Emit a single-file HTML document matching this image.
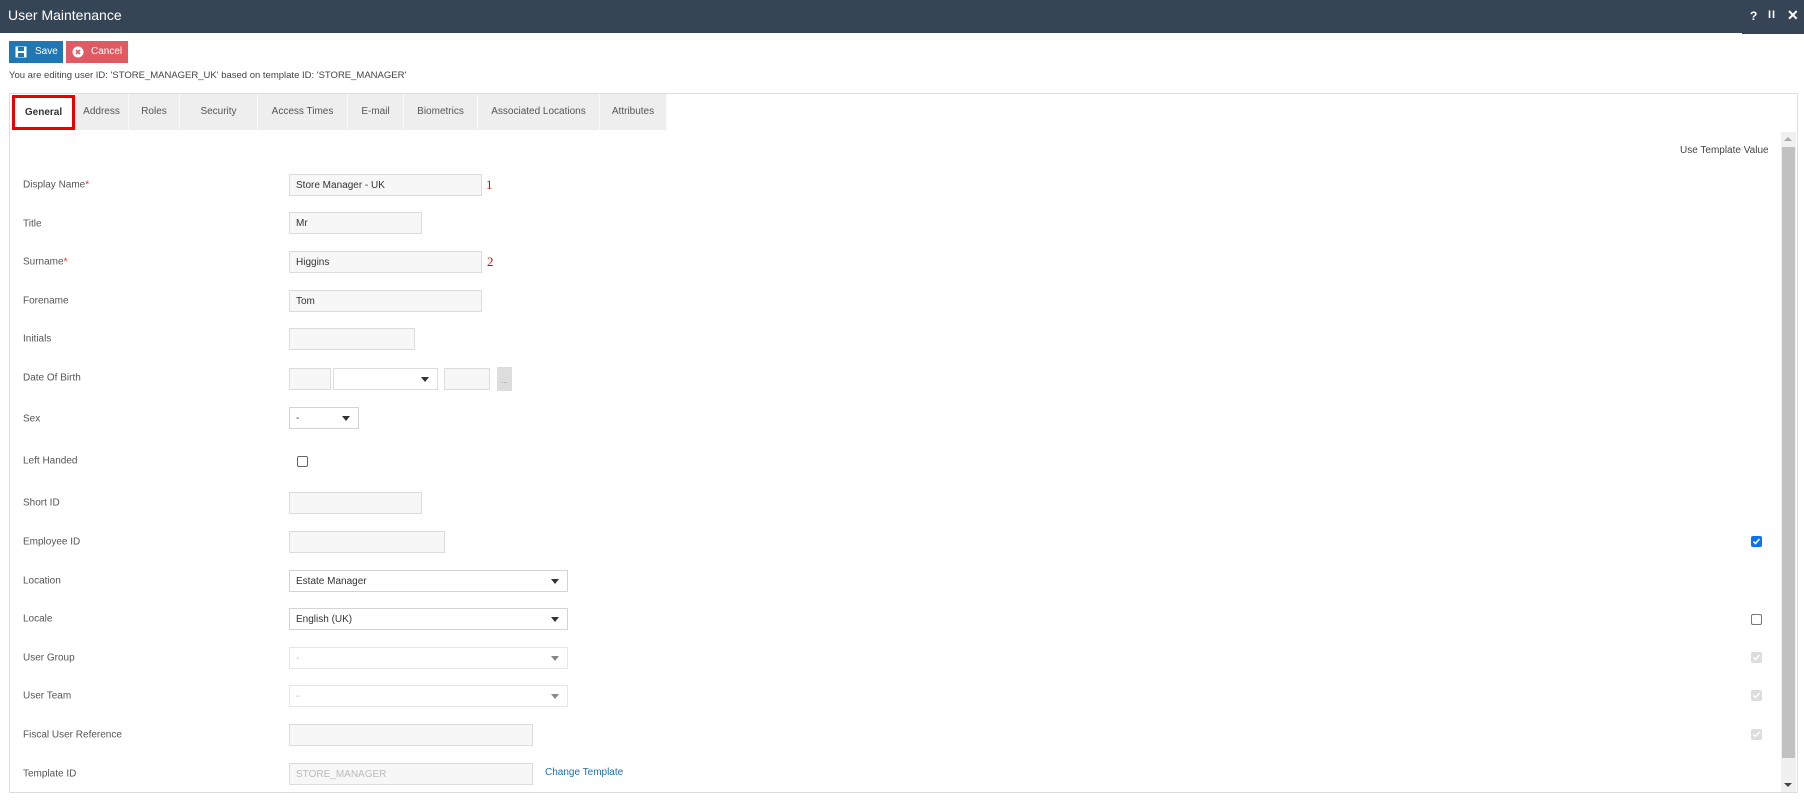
<!DOCTYPE html>
<html><head><meta charset="utf-8"><style>
*{box-sizing:border-box;margin:0;padding:0}
body{width:1804px;height:801px;background:#fff;font-family:"Liberation Sans",Arial,sans-serif;position:relative;overflow:hidden;color:#333}
.a{position:absolute}
.hdr{left:0;top:0;width:1804px;height:33px;background:#364556}
.lbl{position:absolute;left:23px;font-size:10px;color:#555;transform:translateY(-50%)}
.req{color:#d33}
.in{position:absolute;left:289px;height:22px;background:#f7f7f7;border:1px solid #dcdcdc;font-size:10px;padding-left:6px;line-height:21px;color:#333}
.sel{position:absolute;left:289px;height:22px;background:#fff;border:1px solid #d4d4d4;font-size:10px;padding-left:6px;line-height:21px;color:#333}
.sel:after{content:"";position:absolute;right:8px;top:8px;border-left:4px solid transparent;border-right:4px solid transparent;border-top:5px solid #333}
.sel.dis{border-color:#e6e6e6;color:#bbb}
.sel.dis:after{border-top-color:#888}
.tab{position:absolute;top:94px;height:36px;background:#eee;font-size:10px;color:#555;text-align:center;line-height:36px;border-right:1px solid #fafafa}
.cb{position:absolute;width:11px;height:11px;border-radius:2px}
</style></head><body>
<div class="a hdr"></div>
<div class="a" style="left:1742px;top:32px;width:62px;height:2px;background:#364556"></div>
<div class="a" style="left:8px;top:7px;font-size:14px;color:#fff">User Maintenance</div>
<div class="a" style="left:1750px;top:9px;font-size:12px;color:#fff;font-weight:bold">?</div>
<div class="a" style="left:1768px;top:9px;font-size:11px;color:#fff;font-weight:bold;letter-spacing:1px">II</div>
<div class="a" style="left:1787px;top:7px;font-size:14px;color:#fff;font-weight:bold">✕</div>

<div class="a" style="left:9px;top:41px;width:54px;height:22px;background:#1f78b4;color:#fff;font-size:10px;line-height:22px;padding-left:26px">Save</div>
<svg class="a" style="left:15px;top:46px" width="12" height="12" viewBox="0 0 12 12"><rect x="0.5" y="0.5" width="11" height="11" fill="#fff"/><rect x="3" y="1" width="6" height="4" fill="#1f78b4"/><rect x="3" y="7" width="6" height="4" fill="#1f78b4"/></svg>
<div class="a" style="left:66px;top:41px;width:62px;height:22px;background:#e05a63;color:#fff;font-size:10px;line-height:22px;padding-left:25px">Cancel</div>
<svg class="a" style="left:72px;top:46px" width="12" height="12" viewBox="0 0 12 12"><circle cx="6" cy="6" r="5.5" fill="#fff"/><path d="M4 4L8 8M8 4L4 8" stroke="#e05a63" stroke-width="1.6"/></svg>
<div class="a" style="left:9px;top:70px;font-size:9.5px;color:#444">You are editing user ID: 'STORE_MANAGER_UK' based on template ID: 'STORE_MANAGER'</div>

<div class="a" style="left:9px;top:93px;width:1789px;height:700px;border:1px solid #ddd"></div>
<div class="tab" style="left:75px;width:54px">Address</div>
<div class="tab" style="left:129px;width:51px">Roles</div>
<div class="tab" style="left:180px;width:78px">Security</div>
<div class="tab" style="left:258px;width:90px">Access Times</div>
<div class="tab" style="left:348px;width:56px">E-mail</div>
<div class="tab" style="left:404px;width:74px">Biometrics</div>
<div class="tab" style="left:478px;width:122px">Associated Locations</div>
<div class="tab" style="left:600px;width:67px">Attributes</div>
<div class="a" style="left:12px;top:95px;width:63px;height:35px;border:3px solid #e00;background:#fff;font-size:10px;line-height:29px;text-align:center;color:#333;font-weight:bold">General</div>

<div class="a" style="left:1680px;top:145px;font-size:10px;color:#444">Use Template Value</div>
<div class="a" style="left:1781px;top:132px;width:15px;height:660px;background:#f0f0f0"></div>
<div class="a" style="left:1782px;top:147px;width:13px;height:611px;background:#c1c1c1"></div>
<div class="a" style="left:1784px;top:137px;border-left:4px solid transparent;border-right:4px solid transparent;border-bottom:4px solid #aaa"></div>
<div class="a" style="left:1784px;top:783px;border-left:4px solid transparent;border-right:4px solid transparent;border-top:4px solid #444"></div>

<div class="lbl" style="top:185px">Display Name<span class="req">*</span></div>
<div class="in" style="top:174px;width:193px">Store Manager - UK</div>
<div class="a" style="left:486px;top:177px;font-size:13px;color:#e00;font-family:'Liberation Serif',serif">1</div>

<div class="lbl" style="top:224px">Title</div>
<div class="in" style="top:212px;width:133px">Mr</div>

<div class="lbl" style="top:262px">Surname<span class="req">*</span></div>
<div class="in" style="top:251px;width:193px">Higgins</div>
<div class="a" style="left:487px;top:254px;font-size:13px;color:#e00;font-family:'Liberation Serif',serif">2</div>

<div class="lbl" style="top:301px">Forename</div>
<div class="in" style="top:290px;width:193px">Tom</div>

<div class="lbl" style="top:339px">Initials</div>
<div class="in" style="top:328px;width:126px"></div>

<div class="lbl" style="top:378px">Date Of Birth</div>
<div class="in" style="top:368px;width:42px"></div>
<div class="sel" style="left:333px;top:368px;width:105px;border-color:#dcdcdc"></div>
<div class="in" style="left:444px;top:368px;width:46px"></div>
<div class="a" style="left:497px;top:367px;width:15px;height:24px;background:#ddd;font-size:8px;color:#888;text-align:center;line-height:28px">...</div>

<div class="lbl" style="top:419px">Sex</div>
<div class="sel" style="top:407px;width:70px">-</div>

<div class="lbl" style="top:461px">Left Handed</div>
<div class="cb" style="left:297px;top:456px;border:1px solid #666"></div>

<div class="lbl" style="top:503px">Short ID</div>
<div class="in" style="top:492px;width:133px"></div>

<div class="lbl" style="top:542px">Employee ID</div>
<div class="in" style="top:531px;width:156px"></div>
<div class="cb" style="left:1751px;top:536px;background:#0a74f0"><svg width="11" height="11" viewBox="0 0 11 11" style="display:block"><path d="M2.5 5.5L4.5 7.5L8.5 3" stroke="#fff" stroke-width="1.6" fill="none"/></svg></div>

<div class="lbl" style="top:581px">Location</div>
<div class="sel" style="top:570px;width:279px">Estate Manager</div>

<div class="lbl" style="top:619px">Locale</div>
<div class="sel" style="top:608px;width:279px">English (UK)</div>
<div class="cb" style="left:1751px;top:614px;border:1px solid #777"></div>

<div class="lbl" style="top:658px">User Group</div>
<div class="sel dis" style="top:647px;width:279px">-</div>
<div class="cb" style="left:1751px;top:652px;background:#ddd"><svg width="11" height="11" viewBox="0 0 11 11" style="display:block"><path d="M2.5 5.5L4.5 7.5L8.5 3" stroke="#fff" stroke-width="1.4" fill="none"/></svg></div>

<div class="lbl" style="top:696px">User Team</div>
<div class="sel dis" style="top:685px;width:279px">-</div>
<div class="cb" style="left:1751px;top:690px;background:#ddd"><svg width="11" height="11" viewBox="0 0 11 11" style="display:block"><path d="M2.5 5.5L4.5 7.5L8.5 3" stroke="#fff" stroke-width="1.4" fill="none"/></svg></div>

<div class="lbl" style="top:735px">Fiscal User Reference</div>
<div class="in" style="top:724px;width:244px"></div>
<div class="cb" style="left:1751px;top:729px;background:#ddd"><svg width="11" height="11" viewBox="0 0 11 11" style="display:block"><path d="M2.5 5.5L4.5 7.5L8.5 3" stroke="#fff" stroke-width="1.4" fill="none"/></svg></div>

<div class="lbl" style="top:774px">Template ID</div>
<div class="in" style="top:763px;width:244px;color:#bbb">STORE_MANAGER</div>
<div class="a" style="left:545px;top:767px;font-size:10px;color:#1a6fb5">Change Template</div>
</body></html>
